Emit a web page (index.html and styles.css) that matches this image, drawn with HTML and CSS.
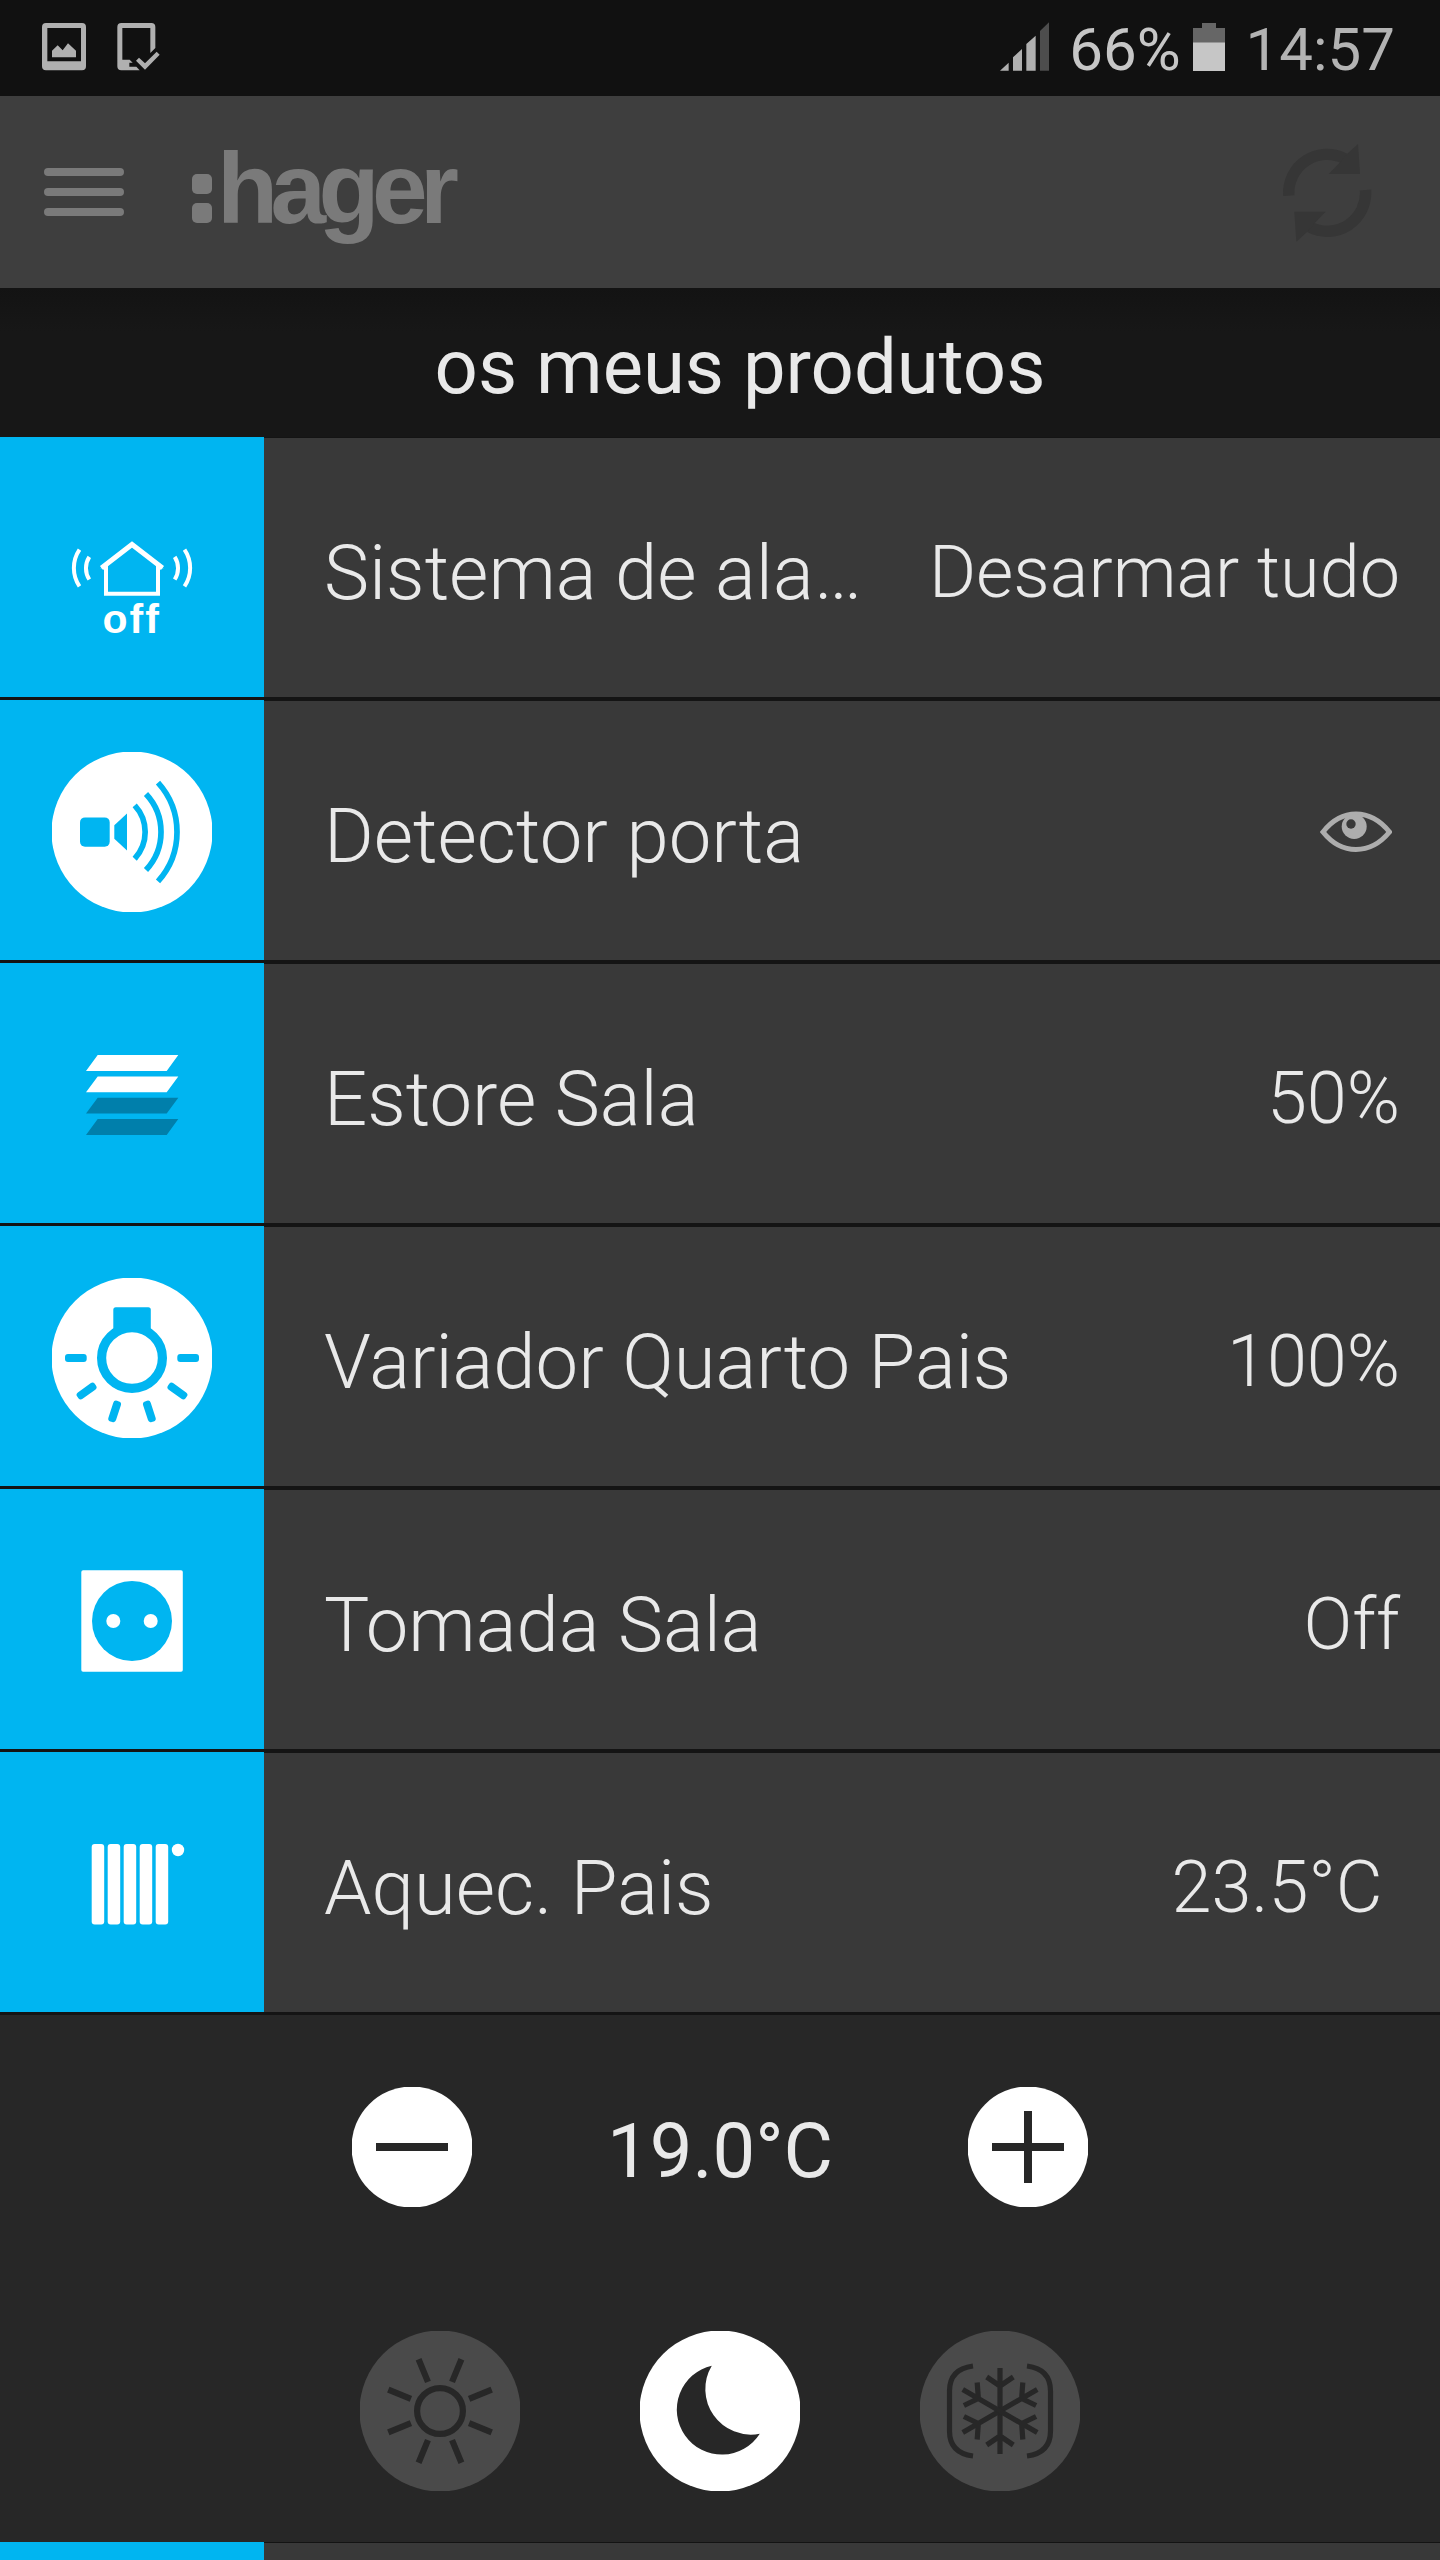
FILE: index.html
```
<!DOCTYPE html>
<html lang="pt">
<head>
<meta charset="utf-8">
<title>os meus produtos</title>
<link rel="stylesheet" href="styles.css">
</head>
<body>
<div class="screen">
  <div class="statusbar">
    <svg class="status-image" width="44" height="48" viewBox="126 70 132 144" fill="#b0b0b0">
      <path fill-rule="evenodd" d="M138 70H246Q258 70 258 82V200Q258 212 246 212H138Q126 212 126 200V82Q126 70 138 70ZM142 85V185H243V85Z"/>
      <path d="M156 173V153L173 137L188 152L204 131L228 153V173Z"/>
    </svg>
    <svg class="status-device" width="43" height="48" viewBox="350 70 129 144" fill="#b0b0b0">
      <path d="M363 70H453Q465 70 465 82V145L450 160V85H366V180H388L397 189H387V201H408L418 212H363Q351 212 351 200V82Q351 70 363 70Z"/>
      <path d="M407 183L416 174L434 191L469 156L478 165L434 210Z"/>
    </svg>
    <div class="status-right">
      <svg class="signal" width="49" height="50" viewBox="120 66 147 150" fill="#b0b0b0">
        <path d="M120 212L146 188V212ZM159 212V172L186 147V212ZM199 212V132L227 107V212Z"/>
        <path d="M240 212V93L267 67V212Z" fill="#4d4d4d"/>
      </svg>
      <span class="battery-text">66%</span>
      <svg class="battery" width="32" height="48" viewBox="0 0 32 48">
        <path d="M9 0H23V5H32V20H0V5H9Z" fill="#666"/>
        <path d="M0 19.5H32V48H0Z" fill="#c6c6c6"/>
      </svg>
      <span class="clock">14:57</span>
    </div>
  </div>

  <header class="appbar">
    <div class="menu"><i></i><i></i><i></i></div>
    <div class="logo">
      <span class="logo-dots"><i></i><i></i></span>
      <span class="logo-text">hager</span>
    </div>
    <svg class="refresh" width="90" height="100" viewBox="970 430 270 300" fill="#363636">
      <g id="turn">
        <path d="M990.5 588A115 115 0 0 1 1158 477" fill="none" stroke="#363636" stroke-width="34"/>
        <path d="M1198 433L1204 523H1110L1145 487L1165 463Z"/>
      </g>
      <use href="#turn" transform="rotate(180 1105.5 579.5)"/>
    </svg>
  </header>

  <h1 class="title">os meus produtos</h1>

  <main>
    <div class="row">
      <div class="tile">
        <svg class="icon" viewBox="0 0 160 160" fill="none" stroke="#fff" stroke-width="4">
          <path d="M49.5 79L80 55.4L110.500 79" stroke-width="5"/>
          <path d="M54 76V104.700H106V76"/>
          <path d="M48.300 79.300L54 75.500V79.300ZM111.700 79.300L106 75.500V79.300Z" fill="#fff" stroke="none"/>
          <path d="M27.500 60.600A32.700 32.700 0 0 0 27.500 97.300M37.300 67.800A21 21 0 0 0 37.300 90.500M132.500 60.600A32.700 32.700 0 0 1 132.500 97.300M122.700 67.800A21 21 0 0 1 122.700 90.500"/>
          <text class="off" x="50.500" y="144">off</text>
        </svg>
      </div>
      <div class="body"><span class="name">Sistema de ala…</span><span class="value">Desarmar tudo</span></div>
    </div>

    <div class="row">
      <div class="tile">
        <svg class="icon" viewBox="0 0 160 160">
          <circle cx="80" cy="80" r="80.500" fill="#fff"/>
          <g fill="#00b5f1">
            <rect x="28" y="65.400" width="29.700" height="29.300" rx="5"/>
            <path d="M62.300 73.300L75 61.600V98.500L62.300 86.800Z"/>
          </g>
          <path d="M82.700 53.400A39.200 39.200 0 0 1 82.700 106.700M94 42A55.600 55.600 0 0 1 94 118M106 30.600A73.700 73.700 0 0 1 106 129.400" fill="none" stroke="#00b5f1" stroke-width="5.700"/>
        </svg>
      </div>
      <div class="body"><span class="name">Detector porta</span>
        <svg class="eye" width="72" height="42" viewBox="0 0 72 42">
          <path d="M3 21Q17 3 36 3T69.500 21Q55 38.500 36 38.500T3 21Z" fill="none" stroke="#adadad" stroke-width="5"/>
          <circle cx="34.200" cy="15.500" r="12.500" fill="#adadad"/>
          <circle cx="31" cy="13" r="4.700" fill="#393939"/>
        </svg>
      </div>
    </div>

    <div class="row">
      <div class="tile">
        <svg class="icon" viewBox="0 0 160 160" fill="#fff">
          <path d="M45.700 40H126.300L114.700 55.900H34ZM45.700 61.400H126.300L114.700 77.200H34Z"/>
          <path d="M45.700 82.700H126.300L114.700 98.600H34ZM45.700 104H126.300L114.700 120H34Z" fill="#007fab"/>
        </svg>
      </div>
      <div class="body"><span class="name">Estore Sala</span><span class="value">50%</span></div>
    </div>

    <div class="row">
      <div class="tile">
        <svg class="icon" viewBox="0 0 160 160" fill="#00b5f1">
          <circle cx="80" cy="80" r="80.500" fill="#fff"/>
          <rect x="61.300" y="29.200" width="37.500" height="25" rx="2.500"/>
          <circle cx="80" cy="80" r="30.400" fill="#fff" stroke="#00b5f1" stroke-width="9.200"/>
          <rect id="ray" x="125.300" y="76" width="21.700" height="8" rx="3"/>
          <use href="#ray" transform="rotate(36 80 80)"/>
          <use href="#ray" transform="rotate(72 80 80)"/>
          <use href="#ray" transform="rotate(108 80 80)"/>
          <use href="#ray" transform="rotate(144 80 80)"/>
          <use href="#ray" transform="rotate(180 80 80)"/>
        </svg>
      </div>
      <div class="body"><span class="name">Variador Quarto Pais</span><span class="value">100%</span></div>
    </div>

    <div class="row">
      <div class="tile">
        <svg class="icon" viewBox="0 0 160 160" fill="#fff">
          <rect x="29.300" y="29.200" width="101.500" height="101.500" rx="1.800"/>
          <circle cx="80" cy="80" r="40" fill="#00b5f1"/>
          <circle cx="61.300" cy="80" r="7"/>
          <circle cx="98.700" cy="80" r="7"/>
        </svg>
      </div>
      <div class="body"><span class="name">Tomada Sala</span><span class="value">Off</span></div>
    </div>

    <div class="row">
      <div class="tile">
        <svg class="icon" viewBox="0 0 160 160" fill="#fff">
          <rect x="39.700" y="40" width="12.500" height="80.500" rx="3"/>
          <rect x="55.700" y="40" width="12.500" height="80.500" rx="3"/>
          <rect x="71.700" y="40" width="12.500" height="80.500" rx="3"/>
          <rect x="87.700" y="40" width="12.500" height="80.500" rx="3"/>
          <rect x="103.700" y="40" width="12.500" height="80.500" rx="3"/>
          <circle cx="126" cy="46" r="6.200"/>
        </svg>
      </div>
      <div class="body"><span class="name">Aquec. Pais</span><span class="value">23.5°C&nbsp;</span></div>
    </div>

    <section class="panel">
      <div class="stepper">
        <svg width="120" height="120" viewBox="-60 -60 120 120">
          <circle r="60.500" fill="#fff"/>
          <path d="M-36 0H36" stroke="#272727" stroke-width="8"/>
        </svg>
        <span class="setpoint">19.0°C</span>
        <svg width="120" height="120" viewBox="-60 -60 120 120">
          <circle r="60.500" fill="#fff"/>
          <path d="M-36 0H36M0 -36V36" stroke="#272727" stroke-width="8"/>
        </svg>
      </div>
      <div class="modes">
        <svg width="160" height="160" viewBox="-80 -80 160 160" fill="none" stroke="#272727" stroke-width="6.200">
          <circle r="80.500" fill="#4a4a4a" stroke="none"/>
          <circle r="22.900"/>
          <path id="beam" d="M29.100 12.050L51.700 21.400M29.100 -12.050L51.700 -21.400"/>
          <use href="#beam" transform="rotate(90)"/>
          <use href="#beam" transform="rotate(180)"/>
          <use href="#beam" transform="rotate(270)"/>
        </svg>
        <svg width="160" height="160" viewBox="-80 -80 160 160">
          <circle r="80.500" fill="#fff"/>
          <path d="M-8.200 -45.300A45 45 0 1 0 39.800 22.700A45.500 45.500 0 0 1 -8.200 -45.300Z" fill="#272727"/>
        </svg>
        <svg width="160" height="160" viewBox="-80 -80 160 160" fill="none" stroke="#272727" stroke-width="5.200">
          <circle r="80.500" fill="#4a4a4a" stroke="none"/>
          <path d="M-27 -45Q-50.500 -42 -50.500 -20V20Q-50.500 42 -27 45M27 -45Q50.500 -42 50.500 -20V20Q50.500 42 27 45"/>
          <g id="arms">
            <path d="M0 -43V43M-13.300 -34L0 -25L13.300 -34M-13.300 34L0 25L13.300 34"/>
          </g>
          <use href="#arms" transform="rotate(60)"/>
          <use href="#arms" transform="rotate(120)"/>
        </svg>
      </div>
    </section>

    <div class="row"><div class="tile"></div><div class="body"></div></div>
  </main>
</div>
</body>
</html>
```
FILE: styles.css
```
* { box-sizing: border-box; }
body { margin: 0; background: #141414; }
svg { display: block; flex: none; }

.screen {
  width: 1440px;
  height: 2560px;
  overflow: hidden;
  background: #141414;
  color: #e9e9e9;
  font-family: Roboto, sans-serif;
  font-size: 76px;
  line-height: 90px;
  white-space: nowrap;
}

.statusbar {
  display: flex;
  align-items: flex-start;
  height: 96px;
  padding: 0 45px 0 42px;
  background: #111;
  font-size: 60px;
  line-height: 71px;
}
.status-image { margin-top: 23px; }
.status-device { margin: 23px 0 0 31px; }
.status-right {
  display: flex;
  align-items: flex-start;
  margin-left: auto;
}
.signal { margin: 22px 20px 0 0; }
.battery-text { margin-top: 14px; color: #c6c6c6; }
.battery { margin: 23px 21px 0 12px; }
.clock { margin-top: 14px; color: #b3b3b3; }

.appbar {
  display: flex;
  align-items: flex-start;
  height: 192px;
  padding-left: 44px;
  background: #3e3e3e;
}
.menu {
  display: flex;
  flex-direction: column;
  gap: 12px;
  width: 80px;
  margin-top: 72px;
}
.menu i { height: 8px; border-radius: 4px; background: #7a7a7a; }
.logo { display: flex; margin-left: 68px; }
.logo-dots {
  display: flex;
  flex-direction: column;
  gap: 9px;
  margin-top: 78px;
}
.logo-dots i { width: 20px; height: 20px; border-radius: 5px; background: #7a7a7a; }
.logo-text {
  margin: 35px 0 0 5px;
  color: #7a7a7a;
  font: 700 100px/115px "Liberation Sans", Arial, sans-serif;
  letter-spacing: -7.6px;
}
.refresh { margin: 47px 68px 0 auto; }

.title {
  height: 149px;
  margin: 0;
  padding: 34px 0 0 40px;
  background: linear-gradient(#131313, #171717 44px);
  font-size: 76px;
  font-weight: 400;
  text-align: center;
}

.row { display: flex; height: 263px; }
.tile {
  flex: none;
  width: 264px;
  height: 260px;
  background: #00b5f1;
}
.icon { width: 160px; height: 160px; margin: 52px; }
.off {
  fill: #fff;
  stroke: none;
  font: 700 41px "Liberation Sans", Arial, sans-serif;
  letter-spacing: 2px;
}
.body {
  display: flex;
  flex: 1;
  align-items: flex-start;
  justify-content: space-between;
  height: 260px;
  padding: 0 40px 0 60px;
  border-top: 1px solid #141414;
  background: #393939;
  font-weight: 300;
}
.name { margin-top: 90px; }
.value { margin-top: 92px; font-size: 72px; line-height: 85px; }
.eye { margin: 110px 8px 0 0; }

.panel {
  height: 527px;
  padding-top: 72px;
  background: #272727;
}
.stepper {
  display: flex;
  justify-content: space-between;
  padding: 0 352px;
}
.setpoint { margin-top: 19px; }
.modes {
  display: flex;
  justify-content: space-between;
  padding: 124px 360px 0;
}
```
